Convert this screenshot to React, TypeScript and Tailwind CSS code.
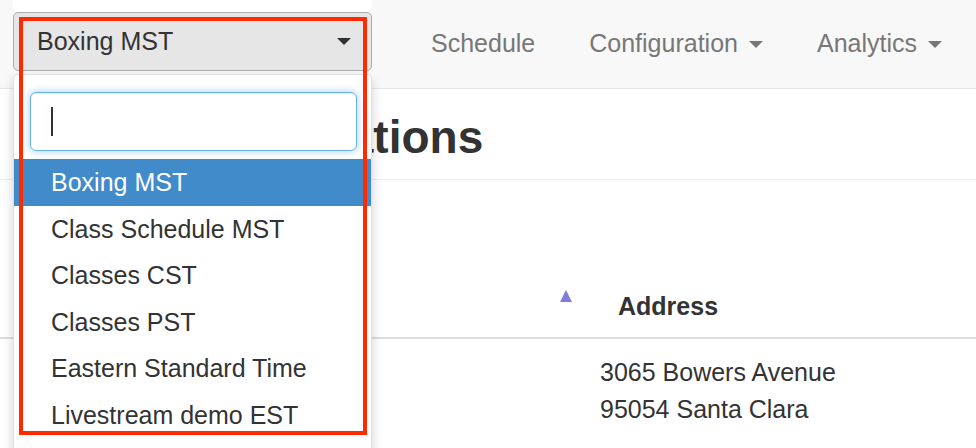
import React from "react"

const zones = [
  "Boxing MST",
  "Class Schedule MST",
  "Classes CST",
  "Classes PST",
  "Eastern Standard Time",
  "Livestream demo EST",
]

function Caret({ color }: { color: string }) {
  return (
    <span
      className="inline-block h-0 w-0 border-x-[7px] border-t-[7px] border-x-transparent"
      style={{ borderTopColor: color }}
    />
  )
}

export default function App() {
  const selected = "Boxing MST"

  return (
    <div className="relative h-[448px] w-[976px] overflow-hidden bg-white font-['Liberation_Sans',Arial,sans-serif] text-[25px] text-[#333]">
      {/* navbar */}
      <nav className="flex h-[89px] items-start border-b border-[#e7e7e7] bg-[#f8f8f8]">
        <div className="ml-[13px] w-[359px]">
          <div className="h-[12px] rounded-b-[6px] bg-white" />
          <button className="flex h-[59px] w-full items-center justify-between rounded-[5px] border border-[#adadad] bg-[#e6e6e6] pl-[23px] pr-[20px] text-[#333]">
            <span>{selected}</span>
            <Caret color="#333" />
          </button>
        </div>
        <ul className="ml-[32px] flex h-[88px] items-center text-[#777]">
          <li className="px-[27px]">Schedule</li>
          <li className="flex items-center gap-[11px] px-[27px]">
            Configuration <Caret color="#777" />
          </li>
          <li className="flex items-center gap-[11px] px-[27px]">
            Analytics <Caret color="#777" />
          </li>
        </ul>
      </nav>

      {/* page header */}
      <div className="border-b border-[#eee] pb-[17px] pl-[266px] pt-[23px]">
        <h1 className="text-[46px] font-bold leading-[50px] text-[#333]">Locations</h1>
      </div>

      {/* table */}
      <div className="pt-[108px]">
        <div className="flex border-b-2 border-[#ddd] pb-[13px]">
          <div className="flex w-[585px] justify-end pr-[13px] pt-[2px]">
            <span className="h-0 w-0 border-x-[6px] border-b-[12px] border-x-transparent border-b-[#7d7ddd]" />
          </div>
          <div className="pl-[33px] font-bold leading-[36px]">Address</div>
        </div>
        <div className="flex pt-[15px]">
          <div className="w-[600px]" />
          <div className="leading-[37px]">
            <div>3065 Bowers Avenue</div>
            <div>95054 Santa Clara</div>
          </div>
        </div>
      </div>

      {/* open dropdown */}
      <div className="absolute left-[13px] top-[74px] h-[400px] w-[359px] rounded-[5px] border border-[rgba(0,0,0,0.12)] bg-white shadow-[0_6px_12px_rgba(0,0,0,0.175)]">
        <div className="pb-[8px] pl-[16px] pr-[14px] pt-[17px]">
          <div className="flex h-[59px] items-center rounded-[6px] border border-[#66afe9] pl-[20px] shadow-[inset_0_1px_1px_rgba(0,0,0,0.075),0_0_8px_rgba(102,175,233,0.6)]">
            <span className="h-[29px] w-[2px] bg-[#333]" />
          </div>
        </div>
        <ul>
          {zones.map((z) => (
            <li
              key={z}
              className={
                z === selected
                  ? "h-[46.6px] bg-[#428bca] pl-[37px] leading-[46.6px] text-white"
                  : "h-[46.6px] pl-[37px] leading-[46.6px] text-[#333]"
              }
            >
              {z}
            </li>
          ))}
        </ul>
      </div>

      {/* annotation box */}
      <div className="pointer-events-none absolute left-[19px] top-[17px] h-[418px] w-[348px] border-4 border-[#ff2a00]" />
    </div>
  )
}
